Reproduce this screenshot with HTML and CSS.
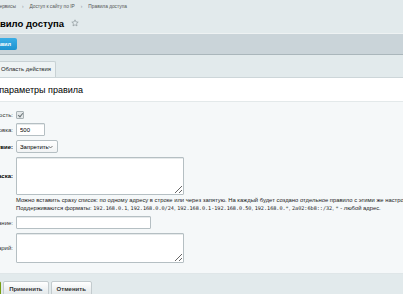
FILE: index.html
```html
<!DOCTYPE html>
<html lang="ru">
<head>
<meta charset="utf-8">
<title>Правило доступа</title>
<link rel="stylesheet" href="styles.css">
</head>
<body>
<div class="page">
  <div class="crumbs">
    <span>Сервисы</span><span class="sep">›</span><span>Доступ к сайту по IP</span><span class="sep">›</span><span>Правила доступа</span>
  </div>
  <h1 class="title">Правило доступа
    <svg class="star" width="8" height="8" viewBox="0 0 24 24"><path d="M12 2.5l2.9 6.2 6.7.7-5 4.6 1.4 6.7L12 17.3l-6 3.4 1.4-6.7-5-4.6 6.7-.7z" fill="none" stroke="#8a9498" stroke-width="2" stroke-linejoin="round"/></svg>
  </h1>
  <div class="toolbar">
    <button class="btn_blue">Список правил</button>
  </div>
  <div class="tabs">
    <div class="tab tab_active">Основные</div>
    <div class="tab">Область действия</div>
  </div>
  <div class="panel">
    <div class="panel_head">Основные параметры правила</div>
    <div class="form">
      <label class="lbl">Активность:</label>
      <div class="fld"><input type="checkbox" class="chk" checked></div>

      <label class="lbl">Сортировка:</label>
      <div class="fld"><input type="text" class="inp inp_small" value="500"></div>

      <label class="lbl lbl_req">Действие:</label>
      <div class="fld">
        <span class="sel_wrap">
          <select class="sel"><option>Запретить</option><option>Разрешить</option></select>
          <svg class="sel_arrow" width="5" height="4" viewBox="0 0 10 6"><path d="M1 1l4 4 4-4" fill="none" stroke="#555" stroke-width="1.6"/></svg>
        </span>
      </div>

      <label class="lbl lbl_req lbl_top">IP-адрес или маска:</label>
      <div class="fld">
        <textarea class="area area_ip"></textarea>
        <div class="hint">
          Можно вставить сразу список: по одному адресу в строке или через запятую. На каждый будет создано отдельное правило с этими же настройками.<br>
          Поддерживаются форматы: <code>192.168.0.1</code>, <code>192.168.0.0/24</code>, <code>192.168.0.1-192.168.0.50</code>, <code>192.168.0.*</code>, <code>2a02:6b8::/32</code>, <code>*</code> - любой адрес.
        </div>
      </div>

      <label class="lbl">Название:</label>
      <div class="fld"><input type="text" class="inp inp_wide"></div>

      <label class="lbl">Комментарий:</label>
      <div class="fld"><textarea class="area area_note"></textarea></div>
    </div>
  </div>
  <div class="buttons">
    <button class="btn btn_save">Сохранить</button>
    <button class="btn">Применить</button>
    <button class="btn">Отменить</button>
  </div>
</div>
</body>
</html>
```

FILE: styles.css
```css
*{
	margin:0;
	padding:0;
	box-sizing:border-box;
	}
body{
	background:#e2eaec;
	font-family:"Liberation Sans", Arial, sans-serif;
	color:#000;
	overflow:hidden;
	}
.page{
	margin-left:-80px;
	width:483px;
	}

/* шапка */
.crumbs{
	height:13px;
	padding-left:76px;
	display:flex;
	align-items:center;
	font-size:4.8px;
	color:#555;
	white-space:nowrap;
	}
.crumbs .sep{
	margin:0 6px;
	color:#8a9498;
	}
.title{
	height:20px;
	padding-left:62px;
	display:flex;
	align-items:center;
	font-size:9.5px;
	font-weight:bold;
	color:#000;
	white-space:nowrap;
	}
.star{
	margin-left:7px;
	}
.toolbar{
	height:22px;
	border-top:1px solid #eef2f3;
	border-bottom:1px solid #aab6bb;
	background:#cad4d9;
	display:flex;
	align-items:center;
	padding-left:43px;
	}
.btn_blue{
	height:12px;
	padding:0 6px;
	border:0;
	border-radius:2px;
	background:linear-gradient(#3aaee6,#1e93d0);
	color:#fff;
	font:bold 5.6px "Liberation Sans", Arial, sans-serif;
	white-space:nowrap;
	}

/* вкладки */
.tabs{
	height:22px;
	display:flex;
	align-items:flex-end;
	padding-left:36px;
	gap:2px;
	}
.tab{
	height:16px;
	line-height:15px;
	padding:0 4px;
	font-size:5.9px;
	color:#222;
	background:#eef3f4;
	border:1px solid #c8d1d4;
	border-bottom:0;
	border-radius:2px 2px 0 0;
	white-space:nowrap;
	}
.tab_active{
	background:#fff;
	}

/* форма */
.panel{
	background:#f5f8f9;
	border-top:1px solid #cdd6d9;
	border-bottom:1px solid #dfe6e8;
	}
.panel_head{
	height:24px;
	padding-left:34px;
	display:flex;
	align-items:center;
	background:#fff;
	border-bottom:1px solid #e3e9ea;
	font-size:9px;
	color:#000;
	white-space:nowrap;
	}
.form{
	display:grid;
	grid-template-columns:93px 1fr;
	column-gap:3px;
	row-gap:4px;
	align-items:center;
	padding:9px 0 10px;
	}
.lbl{
	text-align:right;
	font-size:6px;
	line-height:8px;
	color:#333;
	white-space:nowrap;
	}
.lbl_req{
	font-weight:bold;
	color:#000;
	}
.lbl_top{
	align-self:start;
	margin-top:15px;
	}
.fld{
	display:flex;
	flex-direction:column;
	align-items:flex-start;
	line-height:0;
	}
.chk{
	appearance:none;
	width:8px;
	height:8px;
	border:1px solid #a9b2b5;
	border-radius:1px;
	background:#e4e8e9;
	position:relative;
	}
.chk:checked:after{
	content:"";
	position:absolute;
	left:2px;
	top:0;
	width:2px;
	height:4px;
	border:solid #6b7477;
	border-width:0 1px 1px 0;
	transform:rotate(40deg);
	}
.inp{
	height:13px;
	padding:0 3px;
	border:1px solid #b5bfc3;
	border-radius:1px;
	background:#fff;
	box-shadow:inset 0 1px 0 #e6eaeb;
	font:6px "Liberation Sans", Arial, sans-serif;
	color:#000;
	}
.inp_small{
	width:29px;
	}
.inp_wide{
	width:135px;
	}
.sel_wrap{
	position:relative;
	display:flex;
	}
.sel{
	appearance:none;
	width:42px;
	height:13px;
	padding-left:3px;
	border:1px solid #b5bfc3;
	border-radius:2px;
	background:linear-gradient(#fff,#f1f3f4);
	font:6px "Liberation Sans", Arial, sans-serif;
	color:#000;
	}
.sel_arrow{
	position:absolute;
	right:5px;
	top:5px;
	pointer-events:none;
	}
.area{
	width:168px;
	border:1px solid #b5bfc3;
	border-radius:1px;
	background:#fff;
	box-shadow:inset 0 1px 0 #e6eaeb;
	}
.area_ip{
	height:38px;
	}
.area_note{
	height:30px;
	}
.hint{
	margin-top:1px;
	font-size:5.85px;
	line-height:8px;
	color:#222;
	white-space:nowrap;
	}
.hint code{
	font-family:"DejaVu Sans Mono", monospace;
	font-size:5.15px;
	}

/* кнопки */
.buttons{
	display:flex;
	gap:2px;
	padding:7px 0 0 37px;
	}
.btn{
	height:16px;
	padding:0 5px;
	border:1px solid #c3cbce;
	border-radius:2px;
	background:linear-gradient(#fff,#dfe5e7);
	font:bold 6px "Liberation Sans", Arial, sans-serif;
	color:#333;
	white-space:nowrap;
	}
.btn_save{
	border-color:#789d12;
	background:linear-gradient(#a2c832,#84ab16);
	color:#fff;
	}
```
